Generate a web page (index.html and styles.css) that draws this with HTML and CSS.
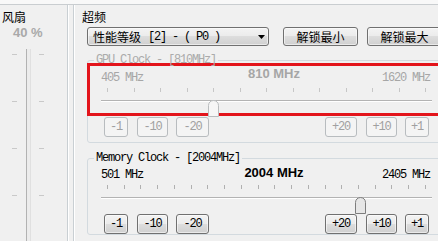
FILE: index.html
```html
<!DOCTYPE html>
<html lang="zh-CN">
<head>
<meta charset="utf-8">
<title>超频</title>
<link rel="stylesheet" href="styles.css">
</head>
<body>
<div class="topline"></div>
<div class="main">
  <section class="fan">
    <div class="title fan-title">风扇</div>
    <div class="fan-value">40 %</div>
    <div class="vslider">
      <div class="vticks"><i></i><i></i><i></i><i></i><i></i></div>
      <div class="vtrack"></div>
      <div class="vticks"><i></i><i></i><i></i><i></i><i></i></div>
    </div>
  </section>

  <section class="oc">
    <div class="title oc-title">超频</div>
    <div class="toolbar">
      <div class="combo">
        <span class="cn">性能等级</span><span class="mono combo-mono">[2] - ( P0 )</span>
        <svg class="arrow" width="7" height="4" viewBox="0 0 7 4"><path d="M0 0H7L3.5 4Z" fill="#000"/></svg>
      </div>
      <button class="btn unlock first">解锁最小</button>
      <button class="btn unlock">解锁最大</button>
    </div>

    <fieldset class="group gpu">
      <legend class="mono">GPU Clock - [810MHz]</legend>
      <div class="highlight">
        <div class="scale">
          <span class="mono min">405 MHz</span>
          <span class="val">810 MHz</span>
          <span class="mono max">1620 MHz</span>
        </div>
        <div class="hticks"><i></i><i></i><i></i><i></i><i></i><i></i><i></i><i></i><i></i><i></i><i></i><i></i><i></i></div>
        <div class="hslider">
          <div class="htrack"></div>
          <svg class="thumb" style="left:107px" width="11" height="17" viewBox="0 0 11 17"><path d="M0.5 16.5V5.5C0.5 2.6 2.7 0.5 5.5 0.5S10.5 2.6 10.5 5.5V16.5Z" fill="#f6f6f6" stroke="#b9bcbe"/></svg>
        </div>
      </div>
      <div class="steps">
        <button class="step s1" disabled>-1</button>
        <button class="step s10" disabled>-10</button>
        <button class="step s20" disabled>-20</button>
        <button class="step p20" disabled>+20</button>
        <button class="step p10" disabled>+10</button>
        <button class="step p1" disabled>+1</button>
      </div>
    </fieldset>

    <fieldset class="group mem">
      <legend class="mono">Memory Clock - [2004MHz]</legend>
      <div class="plain">
        <div class="scale">
          <span class="mono min">501 MHz</span>
          <span class="val">2004 MHz</span>
          <span class="mono max">2405 MHz</span>
        </div>
        <div class="hticks"><i></i><i></i><i></i><i></i><i></i><i></i><i></i><i></i><i></i><i></i><i></i><i></i><i></i><i></i><i></i><i></i><i></i><i></i><i></i><i></i></div>
        <div class="hslider">
          <div class="htrack"></div>
          <svg class="thumb" style="left:254px" width="11" height="17" viewBox="0 0 11 17"><path d="M0.5 16.5V5.5C0.5 2.6 2.7 0.5 5.5 0.5S10.5 2.6 10.5 5.5V16.5Z" fill="#e6e6e6" stroke="#7d7d7d"/></svg>
        </div>
      </div>
      <div class="steps">
        <button class="step s1">-1</button>
        <button class="step s10">-10</button>
        <button class="step s20">-20</button>
        <button class="step p20">+20</button>
        <button class="step p10">+10</button>
        <button class="step p1">+1</button>
      </div>
    </fieldset>
  </section>
</div>
</body>
</html>
```

FILE: styles.css
```css
* { box-sizing: border-box; }
html, body { margin: 0; padding: 0; }
body {
  width: 438px;
  height: 241px;
  overflow: hidden;
  background: #f0f0f0;
  font-family: "Noto Sans CJK SC", sans-serif;
  font-size: 12px;
  color: #000;
}
.mono {
  font-family: "Liberation Mono", monospace;
  font-size: 12px;
  line-height: 12px;
  letter-spacing: -1.2px;
}
.topline {
  height: 5px;
  background: #f8f8f8;
  border-bottom: 1px solid #c9cdd0;
}
.main {
  display: flex;
  height: 236px;
}

/* ---------- fan ---------- */
.fan {
  flex: none;
  width: 68px;
  border-right: 1px solid #c9cfd3;
  box-shadow: 1px 0 0 #fff;
}
.title {
  height: 12px;
  line-height: 12px;
  margin-top: 6px;
  white-space: nowrap;
}
.fan-title { padding-left: 2px; }
.fan-value {
  margin-top: 3px;
  padding-left: 13px;
  font: bold 13px/13px "Liberation Sans", sans-serif;
  color: #a9a9a9;
}
.vslider {
  display: flex;
  margin-top: 10px;
  padding-left: 12px;
  height: 200px;
}
.vticks {
  width: 5px;
  display: flex;
  flex-direction: column;
  gap: 46px;
  padding-top: 5px;
}
.vticks i {
  display: block;
  height: 1px;
  background: #c9c9c9;
}
.vtrack {
  width: 5px;
  margin: 0 8px 0 9px;
  border-left: 1px solid #b2b2b2;
  border-right: 1px solid #e0e0e0;
  background: #ececec;
}

/* ---------- overclock ---------- */
.oc {
  flex: none;
  width: 400px;
  margin-left: 5px;
  border-left: 1px solid #c9cfd3;
  box-shadow: inset 1px 0 0 #fff;
}
.oc-title { padding-left: 8px; }
.toolbar {
  display: flex;
  margin-top: 4px;
  padding-left: 13px;
  height: 19px;
}
.combo, .btn, .step {
  border: 1px solid #707070;
  border-radius: 3px;
  background: linear-gradient(#f3f3f3, #ebebeb 50%, #dddddd 50%, #d0d0d0);
  box-shadow: inset 0 0 0 1px rgba(255,255,255,0.55);
  color: #000;
}
.combo {
  flex: none;
  width: 182px;
  height: 19px;
  display: flex;
  align-items: center;
  padding: 0 3px 0 5px;
}
.combo .cn { line-height: 12px; }
.combo-mono { margin-left: 7px; }
.arrow { margin-left: auto; }
.btn {
  flex: none;
  width: 75px;
  height: 19px;
  padding: 0;
  font: 12px/12px "Noto Sans CJK SC", sans-serif;
  margin-left: 9px;
}
.btn.first { margin-left: 14px; }

.group {
  margin: 8px 0 0 13px;
  padding: 0;
  min-width: 0;
  border: 1px solid #d3dadf;
  border-radius: 3px;
}
.group legend {
  padding: 0 2px;
  margin-left: 6px;
  white-space: nowrap;
}
.gpu legend { color: #ababab; }
.gpu { padding-bottom: 5px; }
.mem { margin-top: 9px; }

.highlight {
  margin: -3px 0 0 -1px;
  height: 53px;
  border: 3px solid #e3141b;
}
.plain {
  margin: -1px 0 0 -1px;
  height: 51px;
  border: 3px solid transparent;
}
.scale {
  display: grid;
  grid-template-columns: 1fr auto 1fr;
  width: 346px;
  height: 18px;
  margin-left: 11px;
}
.scale .min, .scale .max { margin-top: 6px; white-space: nowrap; }
.scale .max { justify-self: end; margin-right: 17px; }
.val {
  font: bold 13px/13px "Liberation Sans", sans-serif;
  margin-top: 1px;
  white-space: nowrap;
}
.gpu .scale { color: #a6a6a6; }
.mem .scale .min, .mem .scale .max { margin-top: 3px; }
.mem .val { margin-top: 0; }

.hticks {
  display: flex;
  justify-content: space-between;
  width: 319px;
  height: 4px;
  margin: 4px 0 0 17px;
}
.hticks i { display: block; width: 1px; background: #c6c6c6; }
.mem .hticks i { background: #b0b0b0; }
.mem .hticks { margin-top: 1px; }

.hslider {
  position: relative;
  width: 331px;
  height: 17px;
  margin: 1px 0 0 11px;
}
.htrack {
  margin-top: 8px;
  height: 2px;
  border-top: 1px solid #b3b3b3;
  background: #fff;
}
.mem .hslider { margin-top: 2px; }
.thumb { position: absolute; top: 0; }

.steps {
  display: flex;
  height: 20px;
  margin-top: 1px;
  padding-left: 16px;
}
.step {
  flex: none;
  height: 20px;
  padding: 0;
  font-family: "Liberation Mono", monospace;
  font-size: 12px;
  line-height: 12px;
  letter-spacing: -1.2px;
}
.step:disabled {
  border-color: #b8bcbf;
  background: #f4f4f4;
  color: #a0a0a0;
  box-shadow: none;
}
.s1 { width: 24px; }
.s10 { width: 31px; margin-left: 9px; }
.s20 { width: 33px; margin-left: 8px; }
.p20 { width: 32px; margin-left: 116px; }
.p10 { width: 31px; margin-left: 9px; }
.p1 { width: 24px; margin-left: 8px; }
.mem .steps { margin-top: 0; }
```
